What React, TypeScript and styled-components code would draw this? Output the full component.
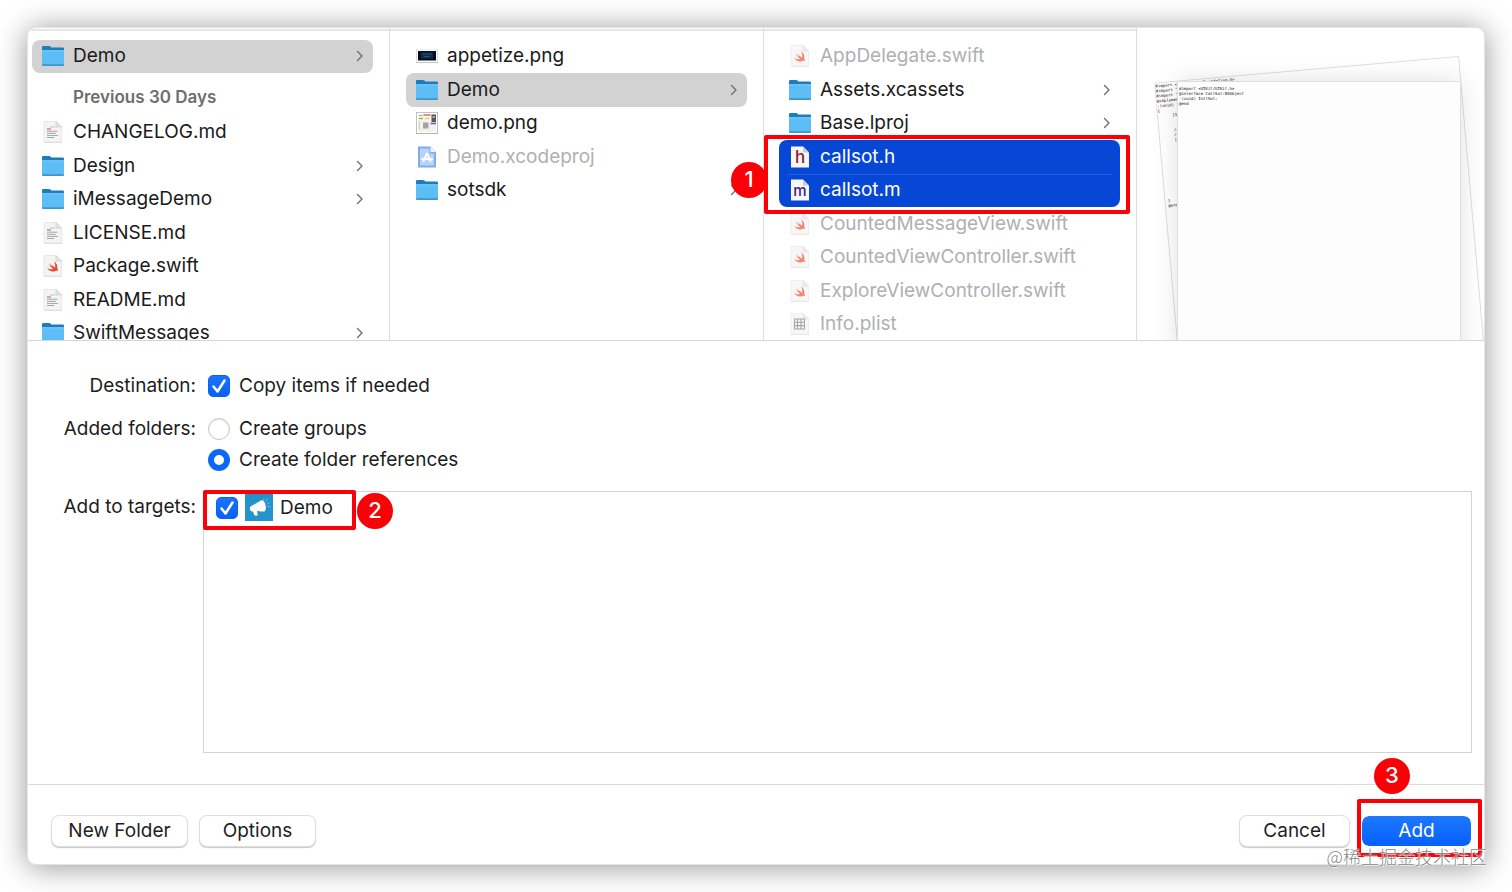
import React from "react";
import styled, { createGlobalStyle, css } from "styled-components";

const GlobalStyle = createGlobalStyle`
  *, *::before, *::after { box-sizing: border-box; }
  body {
    margin: 0;
    background: #fff;
    color: #1d1d1d;
    font-family: Inter, "Noto Sans CJK SC", sans-serif;
    font-size: 19px;
    line-height: 24px;
  }
  button, input { font: inherit; color: inherit; margin: 0; }
  ul { list-style: none; margin: 0; padding: 0; }
`;

const Page = styled.div`
  display: flex;
  min-height: 100vh;
  padding: 27px;
  overflow: hidden;
`;

const Dialog = styled.main`
  position: relative;
  display: flex;
  flex: 1;
  flex-direction: column;
  min-width: 0;
  background: #fff;
  border: 1px solid #e4e4e4;
  border-radius: 9px;
  box-shadow: 0 2px 30px rgba(0, 0, 0, 0.42);
`;

/* ---------- File browser ---------- */

const Browser = styled.section`
  display: grid;
  grid-template-columns: minmax(0, 362fr) minmax(0, 374fr) minmax(0, 373fr) minmax(0, 347fr);
  height: 313px;
  overflow: hidden;
  border-bottom: 1px solid #d6d6d6;
`;

const Column = styled.div<{ $inset: number }>`
  padding-top: 1px;
  border-right: 1px solid #dcdcdc;
  min-width: 0;

  > ul {
    padding: 9px 16px 0 ${(p) => p.$inset}px;
    border-top: 2px solid #e6e6e6;
  }
`;

const GroupTitle = styled.li`
  display: flex;
  align-items: center;
  height: 43px;
  padding: 4px 0 0 41px;
  color: #6e6e6e;
  font-size: 17px;
  font-weight: 600;
`;

type Tone = "plain" | "current" | "picked";

const FileRow = styled.button<{ $tall: boolean; $tone: Tone }>`
  display: flex;
  align-items: center;
  gap: 9px;
  width: 100%;
  height: ${(p) => (p.$tall ? 34 : 33)}px;
  padding: 0 9px 1px 10px;
  border: 0;
  border-radius: 8px;
  background: ${(p) => (p.$tone === "current" ? "#d2d2d2" : "transparent")};
  color: ${(p) => (p.$tone === "picked" ? "#fff" : "#1a1a1a")};
  text-align: left;
  white-space: nowrap;

  &:disabled { color: #b0b0b0; }
  &:disabled svg { opacity: 0.65; }

  > span { flex: 1; }
  > svg { flex: none; }
`;

const Selection = styled.li`
  position: relative;

  > ul {
    background: #0647d6;
    border-radius: 8px;
  }
  li + li::before {
    content: "";
    display: block;
    height: 1px;
    margin: 0 8px -1px;
    background: #2560dd;
  }
`;

/* ---------- Preview ---------- */

const Preview = styled.div`
  position: relative;
  overflow: hidden;
`;

const paper = css`
  position: absolute;
  margin: 0;
  border: 1px solid #dedede;
  background: #fff;
  color: #111;
  font-family: "DejaVu Sans Mono", monospace;
  font-size: 4px;
  line-height: 5px;
`;

const BackPaper = styled.pre`
  ${paper}
  top: 28px;
  right: 25px;
  width: 306px;
  height: 400px;
  transform: rotate(-5deg);
  transform-origin: top right;
`;

const FrontPaper = styled.pre`
  ${paper}
  top: 53px;
  right: 23px;
  width: 284px;
  height: 380px;
  padding: 4px 1px;
  background: #fdfdfd;
  box-shadow: 0 0 24px rgba(0, 0, 0, 0.12);
`;

/* ---------- Options form ---------- */

const Form = styled.section`
  display: grid;
  flex: 1;
  grid-template-columns: 168px minmax(0, 1fr);
  grid-template-rows: auto auto 1fr;
  column-gap: 7px;
  padding: 29px 12px 31px 0;
`;

const FieldLabel = styled.div`
  line-height: 31px;
  text-align: right;
  white-space: nowrap;
`;

const Field = styled.div<{ $after: number }>`
  padding: 0 0 ${(p) => p.$after}px 5px;
`;

const Choice = styled.label`
  display: flex;
  align-items: center;
  gap: 9px;
  height: 31px;
`;

const Stack = styled.span`
  display: grid;
  > * { grid-area: 1 / 1; }
  > svg { pointer-events: none; }
`;

const CheckInput = styled.input`
  appearance: none;
  width: 22px;
  height: 22px;
  border-radius: 5px;
  border: 1px solid #c6c6c6;
  &:checked {
    border-color: #0a62f5;
    background: linear-gradient(#1a73ff, #0a60f5);
  }
`;

const RadioInput = styled.input`
  appearance: none;
  width: 22px;
  height: 22px;
  border: 1px solid #c4c4c4;
  border-radius: 50%;
  box-shadow: inset 0 1px 1px rgba(0, 0, 0, 0.1);
  &:checked {
    border: 6px solid #0d66fa;
    box-shadow: none;
  }
`;

const TargetList = styled.ul`
  position: relative;
  min-height: 200px;
  border: 1px solid #d4d4d4;
`;

const Target = styled.label`
  display: flex;
  align-items: center;
  height: 31px;
  padding-left: 12px;
  gap: 7px;
`;

/* ---------- Footer ---------- */

const Footer = styled.footer`
  display: flex;
  align-items: center;
  gap: 11px;
  height: 80px;
  padding: 12px 12px 0 23px;
  border-top: 1px solid #dadada;
`;

const PushButton = styled.button<{ $primary?: boolean; $wide?: boolean }>`
  width: ${(p) => (p.$wide ? 137 : 117)}px;
  height: 32px;
  padding: 0;
  border: 1px solid #dedede;
  border-radius: 8px;
  background: #fff;
  box-shadow: 0 1px 1px rgba(0, 0, 0, 0.22);
  line-height: 30px;
  white-space: nowrap;
  ${(p) =>
    p.$primary &&
    css`
      border-color: #fff;
      background: linear-gradient(#1d78ff, #0660ff) padding-box;
      box-shadow: none;
      color: #fff;
    `}
`;

const Actions = styled.div`
  display: flex;
  gap: 11px;
  margin-left: auto;

  ${PushButton} { width: 111px; }
`;

const Anchor = styled.div`
  position: relative;
`;

/* ---------- Annotations ---------- */

const Outline = styled.div<{ $top: number; $left: number; $width: number; $height: number }>`
  position: absolute;
  z-index: 2;
  top: ${(p) => p.$top}px;
  left: ${(p) => p.$left}px;
  width: ${(p) => p.$width}px;
  height: ${(p) => p.$height}px;
  border: 4px solid #fb0007;
  border-radius: 2px;
  pointer-events: none;
`;

const Badge = styled.div<{ $top: number; $left: number }>`
  position: absolute;
  z-index: 3;
  top: ${(p) => p.$top}px;
  left: ${(p) => p.$left}px;
  width: 36px;
  height: 36px;
  border-radius: 50%;
  background: #fb0007;
  color: #fff;
  font-size: 22px;
  font-weight: 500;
  line-height: 34px;
  text-align: center;
`;

const Watermark = styled.div`
  position: absolute;
  z-index: 4;
  right: -3px;
  bottom: -5px;
  color: rgba(110, 110, 110, 0.85);
  font-family: "Noto Sans CJK SC", sans-serif;
  font-size: 18px;
  font-weight: 300;
  line-height: 26px;
  text-shadow: 0 0 1px #fff, 1px 1px 0 rgba(255, 255, 255, 0.7);
  white-space: nowrap;
`;

/* ---------- Icons ---------- */

type IconKind =
  | "folder" | "text" | "swift" | "plist" | "project" | "header" | "method" | "darkImage" | "image";

const SheetShape = () => (
  <>
    <path d="M2 20.500h18v1.300H2z" fill="#cfcfcf" opacity=".8" />
    <path d="M2 .5h12l5.500 5.500V21H2z" fill="#f4f4f3" stroke="#dcdcdc" strokeWidth=".6" />
    <path d="M14 .5v5.500h5.500z" fill="#e3e6e4" stroke="#c5c9c6" strokeWidth=".6" />
  </>
);

const FileIcon = ({ kind }: { kind: IconKind }) => (
  <svg width="22" height="22" viewBox="0 0 22 22" aria-hidden="true">
    {kind === "folder" && (
      <>
        <path d="M0 2.200Q0 1 1.200 1h6q.8 0 1.300.6l.8.9h11.500q1.200 0 1.200 1.200V10H0z" fill="#1c7dbd" />
        <path d="M0 5.500h22v14q0 1.300-1.200 1.300H1.200Q0 20.800 0 19.500z" fill="#5dbdf5" />
        <path d="M0 5.300h22v1H0z" fill="#83d0fa" />
        <path d="M0 19.300h22v.4q0 1.300-1.200 1.300H1.200Q0 21 0 19.700z" fill="#3c97cd" />
      </>
    )}
    {kind === "text" && (
      <>
        <SheetShape />
        <path d="M5 8h4" stroke="#e0607c" strokeWidth="1.200" />
        <path d="M5 10.200h10.500M5 12.300h9M5 14.400h11M5 16.500h7" stroke="#a2a5ae" strokeWidth="1" />
        <path d="M8 6h5" stroke="#7fc4a4" strokeWidth=".7" />
      </>
    )}
    {kind === "swift" && (
      <>
        <SheetShape />
        <g transform="translate(4.500 5) scale(.125)">
          <path
            d="M58 8C82 24 92 48 85 66c7 9 9 20 5 24-6-11-16-6-20-3C48 97 20 88 4 64c18 12 36 14 48 6C36 58 22 42 14 30c10 10 24 20 32 24C36 44 28 32 24 24c14 16 32 30 44 38C73 46 70 26 58 8z"
            fill="#f0452c"
          />
        </g>
      </>
    )}
    {kind === "plist" && (
      <>
        <SheetShape />
        <path d="M5.500 6h10v10h-10zM5.500 9.300h10M5.500 12.600h10M8.500 6v10M12 6v10" fill="none" stroke="#777" strokeWidth="1.100" />
      </>
    )}
    {kind === "project" && (
      <>
        <path d="M2 .5h12.500l5.500 5.500V21.500H2z" fill="#3f7fe0" />
        <path d="M4 2.500h9.500v5H18V19.500H4z" fill="#8fbcfa" />
        <path d="M14.500 .5v5.500H20z" fill="#e4effd" />
        <path d="M11 7.500L7.500 15M11 7.500L14.500 15M5.800 13h10.400" fill="none" stroke="#fff" strokeWidth="1.900" strokeLinecap="round" />
      </>
    )}
    {(kind === "header" || kind === "method") && (
      <>
        <path d="M2 .5h12l6 6V21.500H2z" fill="#f6f6f8" />
        <path d="M14 .5v6h6z" fill="#c8cbd6" />
        <text
          x="11"
          y="17"
          textAnchor="middle"
          fontFamily="Inter, sans-serif"
          fontSize={kind === "header" ? 17 : 15}
          fontWeight="500"
          fill={kind === "header" ? "#8b1a2b" : "#3b2079"}
        >
          {kind === "header" ? "h" : "m"}
        </text>
      </>
    )}
    {kind === "darkImage" && (
      <>
        <path d="M0 4.500h22v13.500H0z" fill="#c4c4c4" />
        <path d="M.5 4.500h21v12.500H.5z" fill="#fafafa" />
        <path d="M2 6h18v9.500H2z" fill="#0b0e18" />
        <path d="M5 7.500h12v6H5z" fill="#0f2a4b" />
        <path d="M6.500 9h9M8 11.500h6" stroke="#1f5f96" strokeWidth=".8" />
      </>
    )}
    {kind === "image" && (
      <>
        <path d="M0 0h22v22H0z" fill="#b4b4b4" />
        <path d="M.8.800h20.400v20.200H.8z" fill="#fff" />
        <path d="M2 2h18v18H2z" fill="#f3f3ec" />
        <path d="M7.500 3h7" stroke="#e2674c" strokeWidth="1.400" />
        <path d="M3 3.500h3.500" stroke="#a8a8a0" strokeWidth="1" />
        <path d="M3 6.500h4" stroke="#83c341" strokeWidth="1.400" />
        <path d="M9 6.500h4" stroke="#e5bd62" strokeWidth="1" />
        <path d="M15.500 2.500H20v7.500h-4.500z" fill="#58585c" />
        <path d="M16.500 4h2.500v2h-2.500z" fill="#a6a6aa" />
        <path d="M7 10.500h5.500v6H7z" fill="#a2a2a8" />
        <path d="M14.500 11.500H20" stroke="#7a55c8" strokeWidth="1.600" />
        <path d="M3.500 9v8.500" stroke="#d8d2b0" strokeWidth="1.200" />
      </>
    )}
  </svg>
);

const Chevron = () => (
  <svg width="8" height="12" viewBox="0 0 8 12" fill="none" aria-hidden="true">
    <path d="M1.500 1.500 6 6l-4.500 4.500" stroke="#6f6f6f" strokeWidth="1.400" strokeLinecap="round" strokeLinejoin="round" />
  </svg>
);

const AppIcon = () => (
  <svg width="28" height="27" viewBox="0 0 28 27" aria-hidden="true">
    <path d="M0 0h28v27H0z" fill="#2593cb" />
    <path d="M5.500 12.500 16 6.500q3-1.200 4.500 4.500 1 5-1 6.500-3 .2-6.500-.5l-1 .2.800 4.300H9.500L8 17.500q-2 .3-2.800-1.300-.8-2.200.3-3.700z" fill="#fff" />
    <path d="M20.500 7.500l2-3M22 10l3-1.500M22.500 12.500h3M18.500 5.500l.8-2" stroke="#8fd0ee" strokeWidth=".9" strokeDasharray="1.200 .8" />
  </svg>
);

const Check = () => (
  <Stack>
    <CheckInput type="checkbox" defaultChecked />
    <svg width="22" height="22" viewBox="0 0 22 22" fill="none" aria-hidden="true">
      <path d="M5.500 11.500l4 5L16.500 5.500" stroke="#fff" strokeWidth="2.500" strokeLinecap="round" strokeLinejoin="round" />
    </svg>
  </Stack>
);

/* ---------- Data ---------- */

interface Entry {
  name: string;
  icon: IconKind;
  opens?: boolean;
  current?: boolean;
  disabled?: boolean;
}

const recent: Entry[] = [
  { name: "CHANGELOG.md", icon: "text" },
  { name: "Design", icon: "folder", opens: true },
  { name: "iMessageDemo", icon: "folder", opens: true },
  { name: "LICENSE.md", icon: "text" },
  { name: "Package.swift", icon: "swift" },
  { name: "README.md", icon: "text" },
  { name: "SwiftMessages", icon: "folder", opens: true },
];

const project: Entry[] = [
  { name: "appetize.png", icon: "darkImage" },
  { name: "Demo", icon: "folder", opens: true, current: true },
  { name: "demo.png", icon: "image" },
  { name: "Demo.xcodeproj", icon: "project", disabled: true },
  { name: "sotsdk", icon: "folder", opens: true },
];

const sourcesBefore: Entry[] = [
  { name: "AppDelegate.swift", icon: "swift", disabled: true },
  { name: "Assets.xcassets", icon: "folder", opens: true },
  { name: "Base.lproj", icon: "folder", opens: true },
];

const picked: Entry[] = [
  { name: "callsot.h", icon: "header" },
  { name: "callsot.m", icon: "method" },
];

const sourcesAfter: Entry[] = [
  { name: "CountedMessageView.swift", icon: "swift", disabled: true },
  { name: "CountedViewController.swift", icon: "swift", disabled: true },
  { name: "ExploreViewController.swift", icon: "swift", disabled: true },
  { name: "Info.plist", icon: "plist", disabled: true },
];

const Entries = ({ items, start = 0, picked: isPicked }: { items: Entry[]; start?: number; picked?: boolean }) => (
  <>
    {items.map((item, i) => (
      <li key={item.name}>
        <FileRow
          type="button"
          disabled={item.disabled}
          $tall={(start + i) % 2 === 1}
          $tone={isPicked ? "picked" : item.current ? "current" : "plain"}
        >
          <FileIcon kind={item.icon} />
          <span>{item.name}</span>
          {item.opens && <Chevron />}
        </FileRow>
      </li>
    ))}
  </>
);

const implementationSource = `#import <Foundation/Foundation.h>
#import "callsot.h"
#import "sotsdk.h"
@implementation CallSot
-(void) InitSot;
{
      [Sot

 
      //w
      /*
      [So










       *
 }
 @end`;

const headerSource = `#import <UIKit/UIKit.h>
@interface CallSot:NSObject
-(void) InitSot;
@end`;

export default function App() {
  return (
    <Page>
      <GlobalStyle />
      <Dialog>
        <Browser>
          <Column $inset={4}>
            <ul>
              <Entries items={[{ name: "Demo", icon: "folder", opens: true, current: true }]} />
              <GroupTitle>Previous 30 Days</GroupTitle>
              <Entries items={recent} />
            </ul>
          </Column>
          <Column $inset={16}>
            <ul>
              <Entries items={project} />
            </ul>
          </Column>
          <Column $inset={15}>
            <ul>
              <Entries items={sourcesBefore} />
              <Selection>
                <ul>
                  <Entries items={picked} start={3} picked />
                </ul>
                <Outline $top={-5} $left={-15} $width={366} $height={79} />
                <Badge $top={22} $left={-48}>1</Badge>
              </Selection>
              <Entries items={sourcesAfter} start={5} />
            </ul>
          </Column>
          <Preview>
            <BackPaper>{implementationSource}</BackPaper>
            <FrontPaper>{headerSource}</FrontPaper>
          </Preview>
        </Browser>

        <Form>
          <FieldLabel>Destination:</FieldLabel>
          <Field $after={12}>
            <Choice>
              <Check />
              Copy items if needed
            </Choice>
          </Field>

          <FieldLabel>Added folders:</FieldLabel>
          <Field $after={16} role="radiogroup" aria-label="Added folders">
            <Choice>
              <RadioInput type="radio" name="folders" />
              Create groups
            </Choice>
            <Choice>
              <RadioInput type="radio" name="folders" defaultChecked />
              Create folder references
            </Choice>
          </Field>

          <FieldLabel>Add to targets:</FieldLabel>
          <TargetList>
            <li>
              <Target>
                <Check />
                <AppIcon />
                Demo
              </Target>
            </li>
            <Outline as="li" $top={-2} $left={-1} $width={153} $height={40} />
            <Badge as="li" $top={1} $left={153}>2</Badge>
          </TargetList>
        </Form>

        <Footer>
          <PushButton type="button" $wide>New Folder</PushButton>
          <PushButton type="button">Options</PushButton>
          <Actions>
            <PushButton type="button">Cancel</PushButton>
            <Anchor>
              <PushButton type="button" $primary>Add</PushButton>
              <Outline $top={-16} $left={-4} $width={125} $height={58} />
              <Badge $top={-57} $left={13}>3</Badge>
            </Anchor>
          </Actions>
        </Footer>
        <Watermark>@稀土掘金技术社区</Watermark>
      </Dialog>
    </Page>
  );
}
